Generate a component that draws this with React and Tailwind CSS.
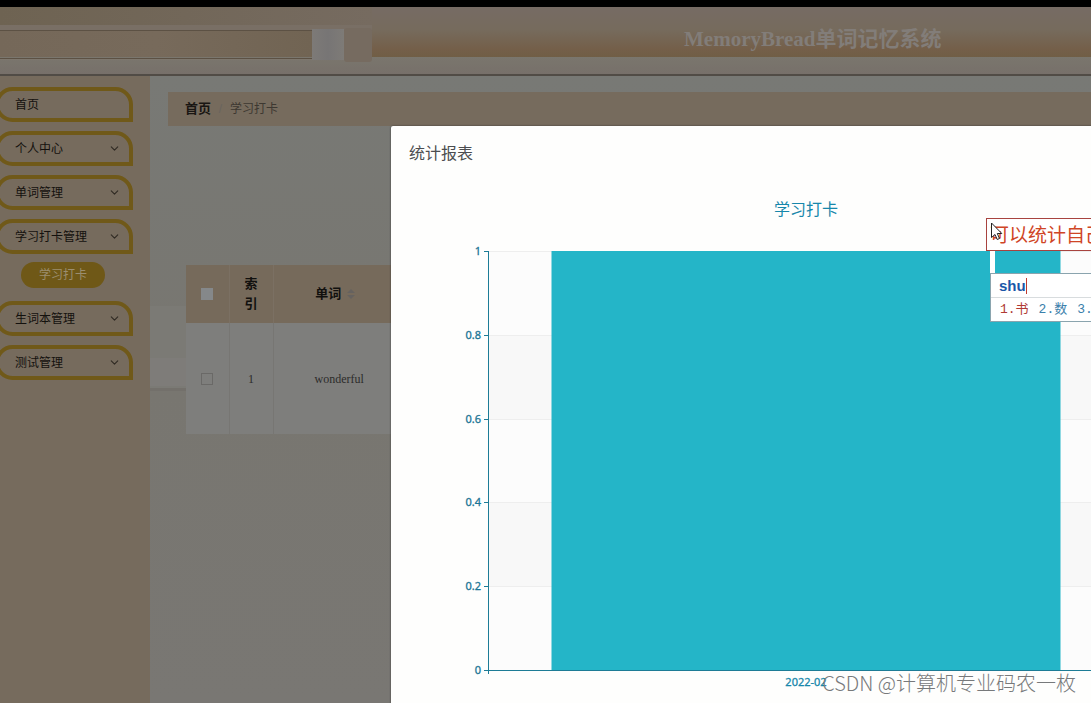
import React from "react";
import { ChevronDown } from "lucide-react";

const SANS = "font-['Liberation_Sans','Noto_Sans_CJK_SC',sans-serif]";
const SERIF = "font-['Liberation_Serif','Noto_Sans_CJK_SC',serif]";

const MENU = [
  { label: "首页" },
  { label: "个人中心", expandable: true },
  { label: "单词管理", expandable: true },
  { label: "学习打卡管理", expandable: true, child: "学习打卡" },
  { label: "生词本管理", expandable: true },
  { label: "测试管理", expandable: true },
];

const TICKS = ["1", "0.8", "0.6", "0.4", "0.2", "0"];

function HeaderBackdrop() {
  return (
    <svg className="absolute inset-0 h-full w-full" viewBox="0 0 1091 67" preserveAspectRatio="none" aria-hidden="true">
      <defs>
        <linearGradient id="sky" x1="0" y1="0" x2="0" y2="1">
          <stop offset="0" stopColor="#766b64" />
          <stop offset="0.45" stopColor="#766b5d" />
          <stop offset="0.85" stopColor="#745f49" />
          <stop offset="1" stopColor="#705e45" />
        </linearGradient>
        <linearGradient id="shelf" x1="0" y1="0" x2="0" y2="1">
          <stop offset="0" stopColor="#7a766d" />
          <stop offset="1" stopColor="#77706a" />
        </linearGradient>
        <linearGradient id="roller" x1="0" y1="0" x2="1" y2="0">
          <stop offset="0" stopColor="#756859" />
          <stop offset="0.5" stopColor="#776a5b" />
          <stop offset="1" stopColor="#716453" />
        </linearGradient>
        <linearGradient id="cap" x1="0" y1="0" x2="1" y2="0">
          <stop offset="0" stopColor="#7d7a77" />
          <stop offset="0.5" stopColor="#777575" />
          <stop offset="1" stopColor="#7e7b77" />
        </linearGradient>
        <linearGradient id="wall" x1="0" y1="0" x2="1" y2="0">
          <stop offset="0" stopColor="#6e6352" />
          <stop offset="1" stopColor="#766b60" />
        </linearGradient>
      </defs>
      <rect width="1091" height="50" fill="url(#sky)" />
      <rect width="372" height="19" fill="url(#wall)" />
      <rect y="18" width="372" height="5" fill="#796f65" />
      <rect y="23" width="312" height="29" fill="url(#roller)" />
      <rect y="23" width="312" height="1" fill="#5c5144" />
      <rect y="50" width="1091" height="17" fill="url(#shelf)" />
      <rect y="51" width="312" height="1" fill="#5c5144" />
      <rect y="52" width="344" height="1" fill="#7e776d" />
      <rect x="312" y="22" width="32" height="31" fill="url(#cap)" />
      <rect x="344" y="21" width="28" height="34" rx="3" fill="#766b60" />
    </svg>
  );
}

function Header() {
  return (
    <header className="relative h-[69px] border-b-2 border-[#514c46]">
      <HeaderBackdrop />
      <h1 className={`relative flex h-[66px] items-center pl-[684px] text-[21px] font-bold whitespace-nowrap text-[#827d79] ${SERIF}`}>
        MemoryBread单词记忆系统
      </h1>
    </header>
  );
}

function Sidebar() {
  return (
    <nav className="w-[150px] shrink-0 overflow-hidden bg-[#766b5d] pt-[11px]">
      <ul className="flex flex-col gap-[9px]">
        {MENU.map((item) => (
          <li key={item.label}>
            <button
              type="button"
              className="-ml-[5px] flex h-[35px] w-[138px] items-center justify-between rounded-[20px] rounded-br-none border-4 border-[#705919] pr-[8px] pl-4 text-xs text-[#14110e]"
            >
              {item.label}
              {item.expandable && <ChevronDown size={13} strokeWidth={2} className="text-[#2f2a23]" />}
            </button>
            {item.child && (
              <a
                href="#checkin"
                className="mt-2 mb-1 ml-[21px] flex h-[26px] w-[84px] items-center justify-center rounded-full bg-[#6f5817] text-xs text-[#9b8e70]"
              >
                {item.child}
              </a>
            )}
          </li>
        ))}
      </ul>
    </nav>
  );
}

function Sorter() {
  return (
    <svg width="8" height="12" viewBox="0 0 8 12" aria-hidden="true">
      <path d="M4 1 8 5H0zM4 11 0 7h8z" fill="#66625f" />
    </svg>
  );
}

function Main() {
  return (
    <main className="relative min-w-0 flex-1 bg-linear-to-b from-[#787975] via-[#787670] to-[#797773] pt-4 pl-[18px]">
      <svg className="absolute top-[230px] left-0" width="36" height="88" viewBox="0 0 36 88" aria-hidden="true">
        <rect width="36" height="84" fill="#7b7a75" />
        <rect y="52" width="36" height="28" fill="#7e7c79" />
        <rect y="82" width="36" height="3" fill="#73706b" />
      </svg>
      <ol className="flex h-[34px] items-center bg-[#766b5d] pl-[17px] text-xs text-[#3d3831]">
        <li>
          <a href="#home" className="text-[13px] font-bold text-[#191613]">首页</a>
        </li>
        <li aria-hidden="true" className="w-[19px] text-center text-[#69645e]">/</li>
        <li>学习打卡</li>
      </ol>
      <table className="mt-[139px] ml-[18px] w-[219px] table-fixed border-collapse bg-[#7e7e7c] text-center">
        <colgroup>
          <col className="w-[43px]" />
          <col className="w-[44px]" />
          <col className="w-[132px]" />
        </colgroup>
        <thead className="bg-[#766a5b] text-[13px] leading-5 text-[#11100e]">
          <tr className="h-[58px]">
            <th className="border-r border-[#7b7063]">
              <input type="checkbox" aria-label="全选" className="mx-auto block h-3 w-3 appearance-none bg-[#85888a]" />
            </th>
            <th className="border-r border-[#7b7063] px-[14px]">索引</th>
            <th>
              <span className="flex items-center justify-center gap-[6px] pr-2">
                单词
                <Sorter />
              </span>
            </th>
          </tr>
        </thead>
        <tbody className={`text-xs text-[#2d2c2b] ${SERIF}`}>
          <tr className="h-[111px]">
            <td className="border-r border-[#777673]">
              <input type="checkbox" aria-label="选择" className="mx-auto block h-3 w-3 appearance-none border border-[#6a6967]" />
            </td>
            <td className="border-r border-[#777673]">1</td>
            <td>wonderful</td>
          </tr>
        </tbody>
      </table>
    </main>
  );
}

function Chart() {
  return (
    <svg width="795" height="538" viewBox="0 0 795 538" role="img" aria-label="学习打卡" className={`block ${SANS}`}>
      <text x="397" y="24" textAnchor="middle" fontSize="16" fill="#1787ab">学习打卡</text>
      {TICKS.slice(0, 5).map((tick, i) => (
        <rect key={tick} x="80" y={60 + Math.round(i * 83.8)} width="635" height="84" fill={i % 2 ? "#f8f8f8" : "#fcfcfc"} />
      ))}
      {TICKS.map((tick, i) => {
        const y = 60.5 + Math.round(i * 83.8);
        return (
          <g key={tick}>
            <path d={`M80 ${y}H715`} stroke="#eeeeee" />
            <path d={`M75 ${y}h5`} stroke="#1d7c96" />
            <text x="72" y={y + 3.5} textAnchor="end" fontSize="11" fill="#1a7595" stroke="#1a7595" strokeWidth="0.3" className="font-['Noto_Sans',sans-serif]">
              {tick}
            </text>
          </g>
        );
      })}
      <rect x="142.500" y="60" width="509" height="419" fill="#24b5c8" />
      <path d="M79.500 60V483M75 479.500H715" stroke="#1d7c96" fill="none" />
      <text x="397" y="495" textAnchor="middle" fontSize="11" fill="#1787ab" stroke="#1787ab" strokeWidth="0.3" className="font-['Noto_Sans',sans-serif]">
        2022-02
      </text>
    </svg>
  );
}

function Dialog() {
  return (
    <div className="absolute inset-0 overflow-hidden pt-[126px] pl-[391px]">
      <section role="dialog" aria-label="统计报表" className="w-[831px] rounded-[2px] bg-[#fefefd] px-[18px] pt-4 pb-8 shadow-[0_0_2px_#333]">
        <h2 className="text-base leading-6 text-[#4c4d50]">统计报表</h2>
        <div className="pt-[25px]">
          <Chart />
        </div>
      </section>
    </div>
  );
}

function Annotation() {
  return (
    <div className="absolute top-[218px] right-0 left-[986px] overflow-hidden whitespace-nowrap">
      <p className="h-[33px] border border-r-0 border-[#a8433f] bg-white pl-[3px] text-[19px] leading-[34px] text-[#cf4526]">
        可以统计自己
      </p>
      <div className="ml-1 h-[22px] w-[5px] bg-white" />
      <div className="ml-1 h-[49px] border border-r-0 border-[#8aa4ae] bg-white">
        <div className="flex h-6 items-center border-b border-[#d8dcde] pl-2">
          <input
            aria-label="拼音"
            defaultValue="shu"
            className="h-4 w-7 border-r border-[#c03a30] text-[15px] leading-4 font-bold text-[#1a56a8] outline-none"
          />
        </div>
        <ol className="flex h-[23px] items-center gap-[10px] pl-[9px] font-['Liberation_Mono','Noto_Sans_CJK_SC',monospace] text-[13px] text-[#3a80ab]">
          <li className="text-[#b03a34]">1.书</li>
          <li>2.数</li>
          <li>3.</li>
        </ol>
      </div>
      <svg className="absolute top-1 left-[5px]" width="12" height="19" viewBox="0 0 12 19" aria-hidden="true">
        <path d="M.5 1v14.500l3.500-3 2.200 5 2.300-1-2.200-5h4.500z" fill="#fff" stroke="#222" />
      </svg>
    </div>
  );
}

export default function App() {
  return (
    <div className={`relative flex min-h-screen flex-col overflow-hidden border-t-[7px] border-black bg-[#797773] ${SANS}`}>
      <Header />
      <div className="flex flex-1">
        <Sidebar />
        <Main />
      </div>
      <div className="absolute inset-0 -top-[7px]">
        <Dialog />
        <Annotation />
        <p className="absolute right-[15px] bottom-[6px] font-['Noto_Sans_CJK_SC',sans-serif] text-xl leading-7 font-light text-[#77797b]">
          CSDN @计算机专业码农一枚
        </p>
      </div>
    </div>
  );
}
